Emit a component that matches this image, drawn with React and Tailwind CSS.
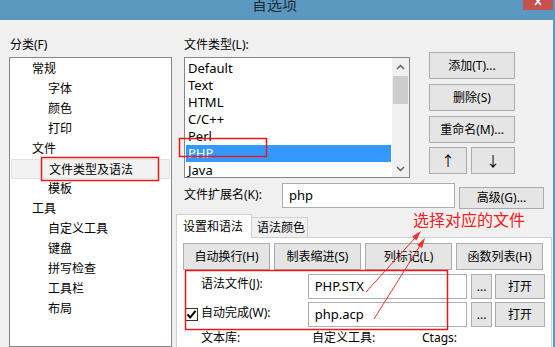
import React from "react";

const font = "font-['Noto_Sans','Noto_Sans_CJK_SC',sans-serif]";

const btn =
  "flex items-center justify-center bg-[#e5e5e5] border border-[#acacac] text-[12px] leading-none";

const input = "bg-white border border-[#abadb3] flex items-center pl-[6px] text-[13px]";

// =========================================
// DATA
// =========================================

const treeItems = [
  { label: "常规", level: 1 },
  { label: "字体", level: 2 },
  { label: "颜色", level: 2 },
  { label: "打印", level: 2 },
  { label: "文件", level: 1 },
  { label: "文件类型及语法", level: 2, selected: true },
  { label: "模板", level: 2 },
  { label: "工具", level: 1 },
  { label: "自定义工具", level: 2 },
  { label: "键盘", level: 2 },
  { label: "拼写检查", level: 2 },
  { label: "工具栏", level: 2 },
  { label: "布局", level: 2 },
];

const fileTypes = ["Default", "Text", "HTML", "C/C++", "Perl", "PHP", "Java"];

function Chevron({ up }) {
  return (
    <svg width="9" height="6" viewBox="0 0 9 6">
      <path
        d={up ? "M1 5 L4.5 1.5 L8 5" : "M1 1 L4.5 4.5 L8 1"}
        fill="none"
        stroke="#606060"
        strokeWidth="1.5"
      />
    </svg>
  );
}

function App() {
  return (
    <div
      className={`relative w-[555px] h-[347px] overflow-hidden bg-[#f0f0f0] text-[12px] text-black ${font}`}
    >
      {/* TITLE BAR */}
      <div className="h-[20px] bg-[#5b98bf] flex items-start overflow-hidden">
        <span className="ml-[252px] mt-[-3px] text-[15px] leading-[15px] text-[#1e2b38]">
          首选项
        </span>
        <div className="ml-auto mr-[2px] w-[30px] h-[10px] bg-[#c75050] flex justify-center">
          <svg width="10" height="6" viewBox="0 0 10 6">
            <path d="M2 -2 L8 5 M8 -2 L2 5" stroke="#fff" strokeWidth="1.6" />
          </svg>
        </div>
      </div>

      {/* BODY */}
      <div className="flex h-[327px] border-r-2 border-[#5b98bf]">
        {/* LEFT TREE */}
        <div className="w-[176px] shrink-0 pl-[9px] pt-[17px] flex flex-col">
          <div className="h-[16px] leading-[16px] pl-[1px]">分类(F)</div>
          <div className="mt-[4px] w-[163px] h-[300px] bg-white border border-[#828790] pt-[1px]">
            {treeItems.map((item) => (
              <div
                key={item.label}
                className={`h-[20px] leading-[20px] mx-[1px] ${
                  item.level === 1 ? "pl-[21px]" : "pl-[37px]"
                } ${item.selected ? "bg-[#f2f2f2] border border-[#e3e3e3] leading-[18px]" : ""}`}
              >
                {item.label}
              </div>
            ))}
          </div>
        </div>

        {/* RIGHT SIDE */}
        <div className="flex-1 flex flex-col">
          {/* FILE TYPES + BUTTONS */}
          <div className="flex pt-[17px] pl-[8px]">
            <div className="w-[226px]">
              <div className="h-[16px] leading-[16px]">文件类型(L):</div>
              <div className="mt-[4px] h-[121px] bg-white border border-[#828790] flex overflow-hidden">
                <div className="flex-1 mx-[1px] pt-[2px]">
                  {fileTypes.map((t) => (
                    <div
                      key={t}
                      className={`h-[17px] leading-[17px] pl-[2px] text-[13px] ${
                        t === "PHP" ? "bg-[#3399ff] text-white" : ""
                      }`}
                    >
                      {t}
                    </div>
                  ))}
                </div>
                <div className="w-[17px] bg-[#f0f0f0] flex flex-col">
                  <div className="h-[17px] flex items-center justify-center">
                    <Chevron up />
                  </div>
                  <div className="mt-[1px] h-[28px] mx-[1px] bg-[#cdcdcd]" />
                  <div className="flex-1" />
                  <div className="h-[17px] flex items-center justify-center">
                    <Chevron />
                  </div>
                </div>
              </div>
            </div>

            <div className="ml-[19px] mt-[15px] w-[86px] flex flex-col gap-[5px]">
              <div className={`${btn} h-[27px]`}>添加(T)...</div>
              <div className={`${btn} h-[27px]`}>删除(S)</div>
              <div className={`${btn} h-[27px]`}>重命名(M)...</div>
              <div className="flex gap-[4px] -mt-[1px]">
                <div className={`${btn} w-[38px] h-[27px] text-[14px]`}>↑</div>
                <div className={`${btn} w-[44px] h-[27px] text-[14px]`}>↓</div>
              </div>
            </div>
          </div>

          {/* EXTENSION */}
          <div className="mt-[5px] pl-[8px] flex items-start h-[25px]">
            <div className="w-[98px] leading-[24px]">文件扩展名(K):</div>
            <div className={`${input} w-[173px] h-[25px]`}>php</div>
            <div className={`${btn} ml-[4px] mt-[4px] w-[85px] h-[22px]`}>高级(G)...</div>
          </div>

          {/* TABS */}
          <div className="mt-[6px] flex items-end h-[23px] relative z-10">
            <div className="w-[76px] h-[24px] -mb-[1px] bg-white border border-b-0 border-[#d0d0d0] pl-[6px] leading-[24px]">
              设置和语法
            </div>
            <div className="w-[56px] h-[20px] bg-[#f0f0f0] border border-l-0 border-b-0 border-[#d0d0d0] pl-[5px] leading-[20px]">
              语法颜色
            </div>
          </div>

          {/* PANEL */}
          <div className="w-[376px] flex-1 bg-white border border-[#d0d0d0] px-[6px] pt-[5px]">
            <div className="flex gap-[4px]">
              <div className={`${btn} w-[87px] h-[27px]`}>自动换行(H)</div>
              <div className={`${btn} w-[87px] h-[27px]`}>制表缩进(S)</div>
              <div className={`${btn} w-[87px] h-[27px]`}>列标记(L)</div>
              <div className={`${btn} w-[87px] h-[27px]`}>函数列表(H)</div>
            </div>

            <div className="mt-[4px] flex items-start h-[25px]">
              <div className="w-[125px] pl-[18px] leading-[20px]">语法文件(J):</div>
              <div className={`${input} w-[160px] h-[25px]`}>PHP.STX</div>
              <div className={`${btn} ml-[4px] w-[21px] h-[25px]`}>...</div>
              <div className={`${btn} ml-[3px] w-[50px] h-[25px]`}>打开</div>
            </div>

            <div className="mt-[3px] flex items-start h-[25px]">
              <div className="w-[125px] pl-[2px] flex items-start">
                <div className="mt-[6px] w-[13px] h-[13px] border border-[#333] bg-white flex items-center justify-center">
                  <svg width="11" height="11" viewBox="0 0 11 11">
                    <path d="M1.5 5.5 L4.2 8.5 L9.5 1.8" fill="none" stroke="#000" strokeWidth="2" />
                  </svg>
                </div>
                <span className="ml-[3px] leading-[22px]">自动完成(W):</span>
              </div>
              <div className={`${input} w-[160px] h-[25px]`}>php.acp</div>
              <div className={`${btn} ml-[4px] w-[21px] h-[25px]`}>...</div>
              <div className={`${btn} ml-[3px] w-[50px] h-[25px]`}>打开</div>
            </div>

            <div className="flex h-[22px] leading-[22px]">
              <div className="w-[129px] pl-[18px]">文本库:</div>
              <div className="w-[110px]">自定义工具:</div>
              <div>Ctags:</div>
            </div>
          </div>
        </div>
      </div>

      {/* ANNOTATION */}
      <div className="absolute left-[413px] top-[210px] text-[16px] leading-[20px] text-[#f02020]">
        选择对应的文件
      </div>
      <svg
        className="absolute inset-0 pointer-events-none"
        width="555"
        height="347"
        viewBox="0 0 555 347"
      >
        <g fill="none" stroke="#e81818" strokeWidth="1.5">
          <rect x="41.5" y="157.5" width="117" height="23" />
          <rect x="179.5" y="138.5" width="87" height="18" />
          <rect x="185.5" y="270.5" width="262" height="59" />
        </g>
        <g stroke="#f03030" strokeWidth="1">
          <line x1="366" y1="292" x2="416" y2="237" />
          <line x1="374" y1="319" x2="421" y2="244" />
        </g>
        <g fill="#f03030">
          <polygon points="421,231 416.5,240.4 412.1,236.4" />
          <polygon points="425,238 422.2,248.1 417.1,244.9" />
        </g>
      </svg>
    </div>
  );
}

export default App;
